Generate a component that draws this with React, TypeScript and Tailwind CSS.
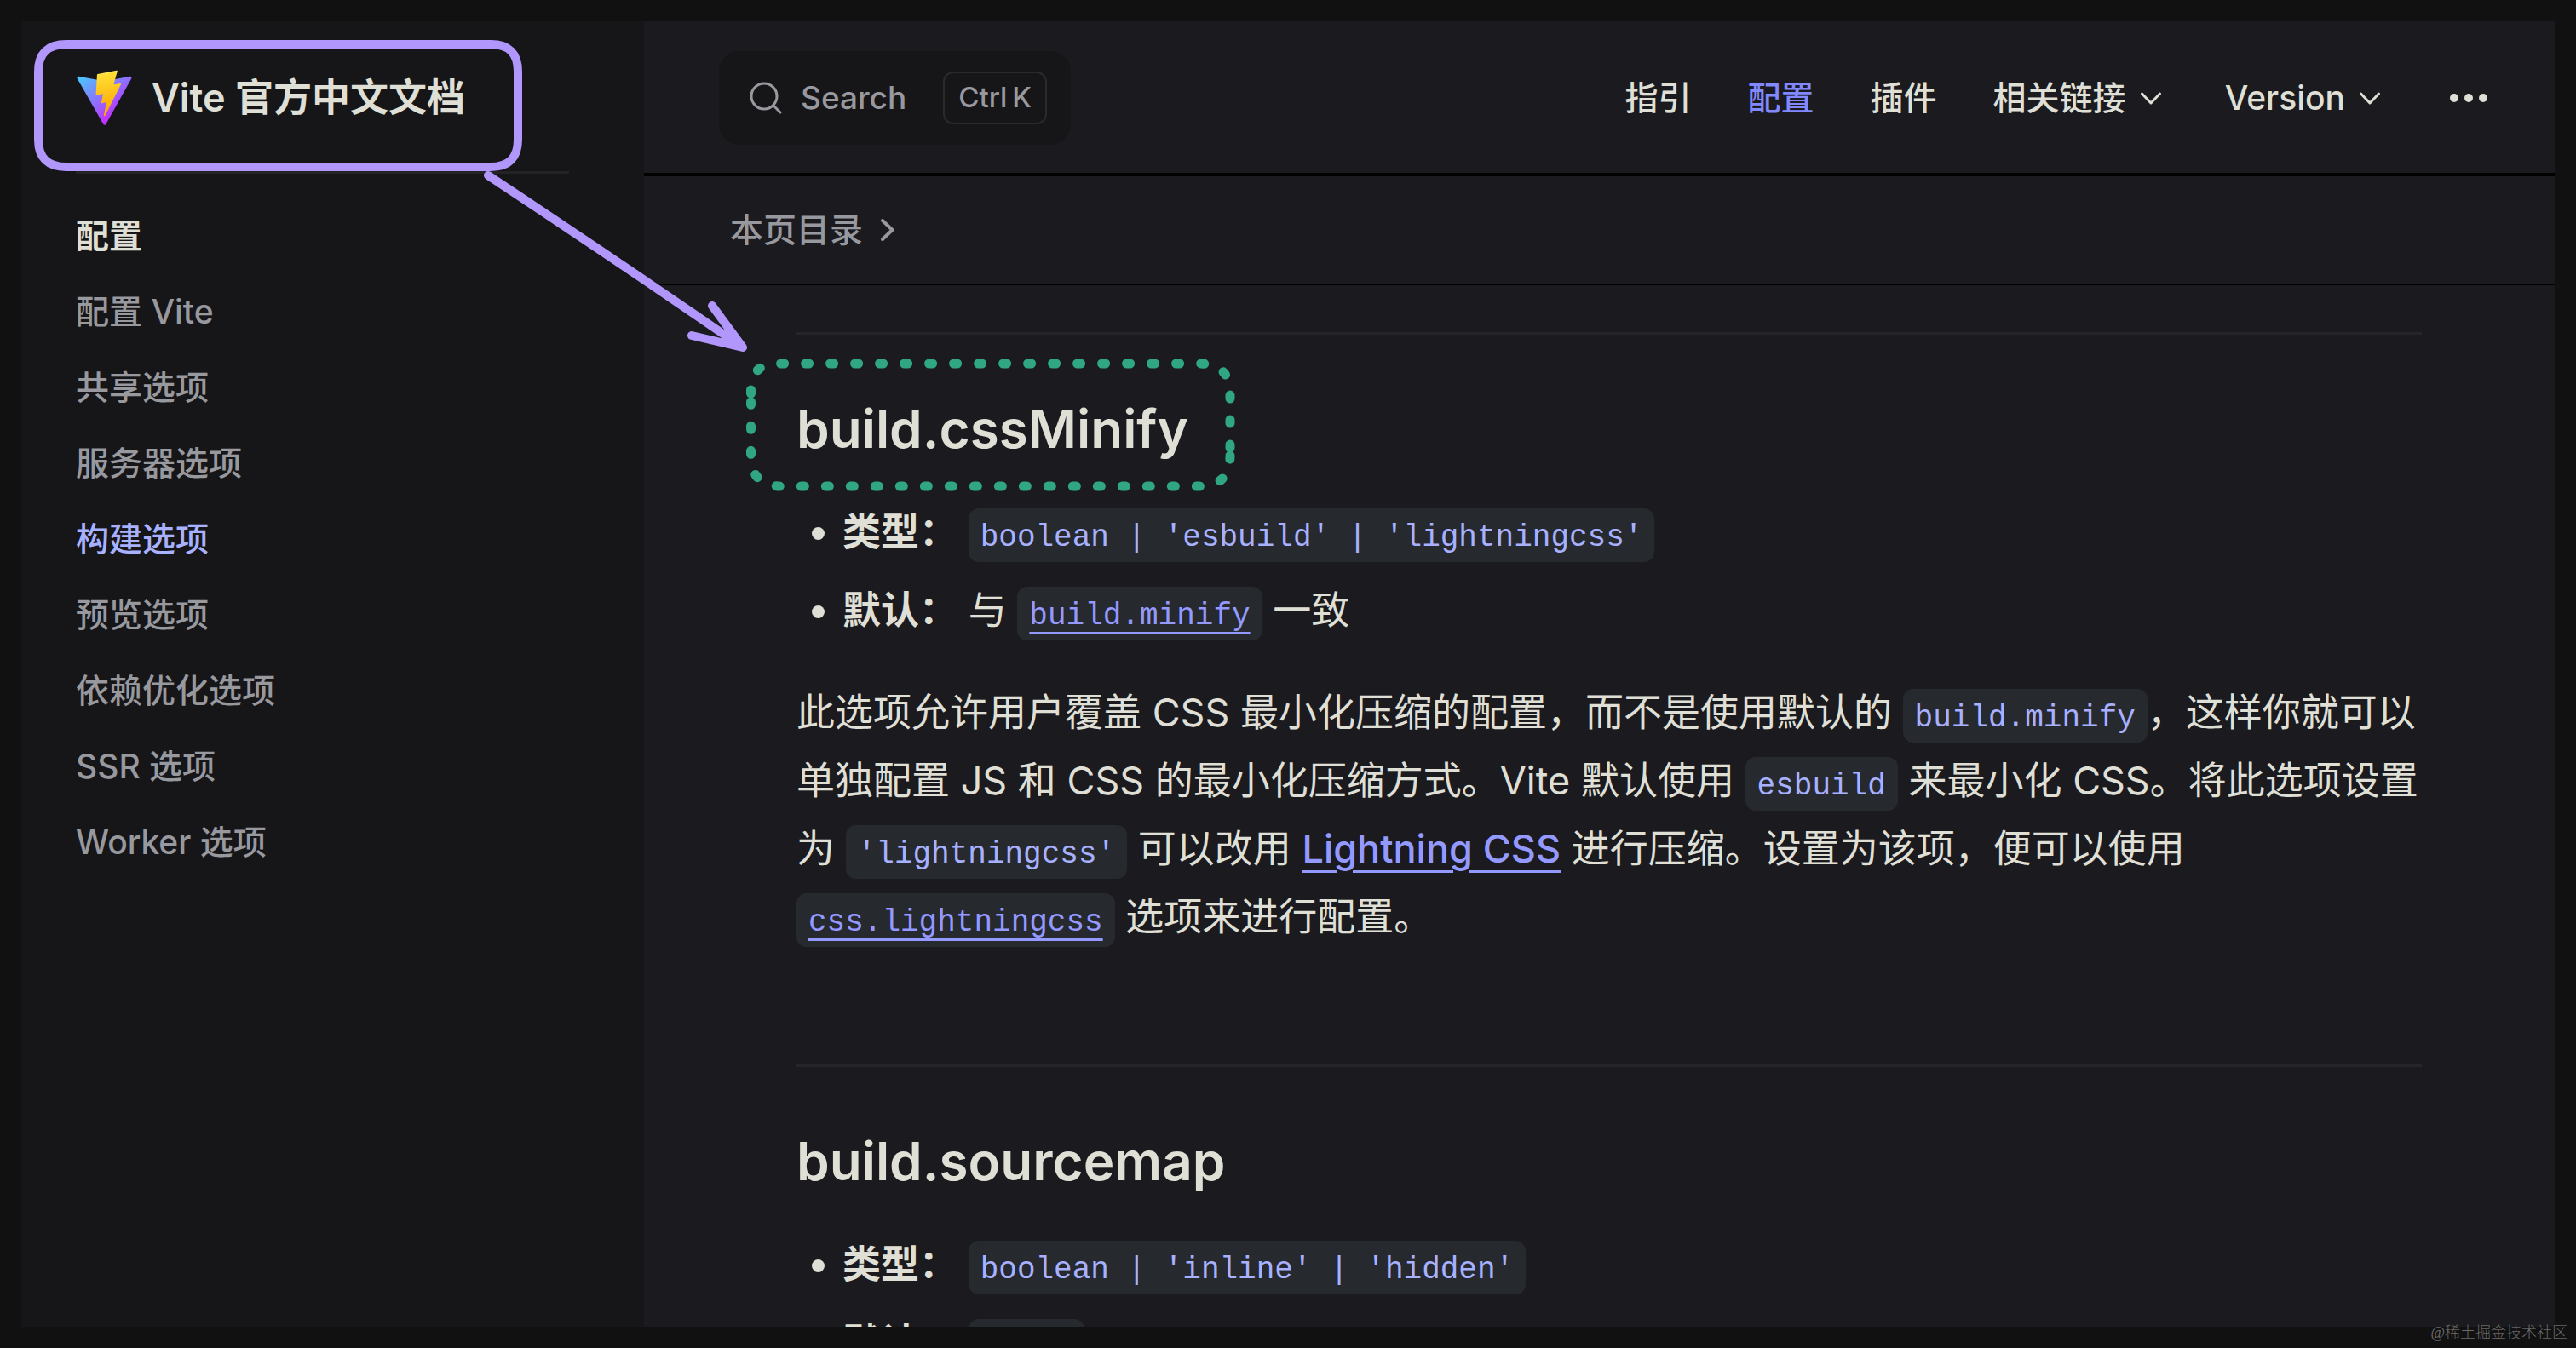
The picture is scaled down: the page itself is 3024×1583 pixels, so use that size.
import type { ReactNode } from "react";

const SIDEBAR_ITEMS = [
  "配置 Vite",
  "共享选项",
  "服务器选项",
  "构建选项",
  "预览选项",
  "依赖优化选项",
  "SSR 选项",
  "Worker 选项",
];
const ACTIVE_ITEM = "构建选项";

function ViteLogo() {
  return (
    <svg className="h-[67px] w-[67px] shrink-0" viewBox="0 0 410 404" fill="none" aria-hidden="true">
      <path
        d="M399.641 59.525L215.643 388.545C211.844 395.338 202.084 395.378 198.228 388.618L10.582 59.556C6.381 52.19 12.68 43.267 21.028 44.759L205.223 77.682C206.398 77.892 207.601 77.89 208.776 77.676L389.119 44.806C397.439 43.289 403.768 52.143 399.641 59.525Z"
        fill="url(#viteBody)"
      />
      <path
        d="M292.965 1.574L156.801 28.255C154.563 28.694 152.906 30.59 152.771 32.866L144.395 174.33C144.198 177.662 147.258 180.248 150.51 179.498L188.42 170.749C191.967 169.931 195.172 173.055 194.443 176.622L183.18 231.775C182.422 235.487 185.907 238.661 189.532 237.56L212.947 230.446C216.577 229.344 220.065 232.527 219.297 236.242L201.398 322.875C200.278 328.294 207.486 331.249 210.492 326.603L212.5 323.5L323.454 102.072C325.312 98.365 322.108 94.137 318.036 94.923L279.014 102.454C275.347 103.161 272.227 99.746 273.262 96.158L298.731 7.867C299.767 4.273 296.636 0.855 292.965 1.574Z"
        fill="url(#viteBolt)"
      />
      <defs>
        <linearGradient id="viteBody" x1="6" y1="33" x2="235" y2="344" gradientUnits="userSpaceOnUse">
          <stop stopColor="#41D1FF" />
          <stop offset="1" stopColor="#BD34FE" />
        </linearGradient>
        <linearGradient id="viteBolt" x1="194.651" y1="8.818" x2="236.076" y2="292.989" gradientUnits="userSpaceOnUse">
          <stop stopColor="#FFEA83" />
          <stop offset="0.083" stopColor="#FFDD35" />
          <stop offset="1" stopColor="#FFA800" />
        </linearGradient>
      </defs>
    </svg>
  );
}

function SearchIcon() {
  return (
    <svg className="h-[38px] w-[38px]" viewBox="0 0 38 38" fill="none" stroke="currentColor" strokeWidth="3" strokeLinecap="round" aria-hidden="true">
      <circle cx="17" cy="17" r="15" />
      <path d="M28 28l8 8" />
    </svg>
  );
}

function ChevronDown() {
  return (
    <svg className="h-[24px] w-[26px]" viewBox="0 0 26 24" fill="none" stroke="currentColor" strokeWidth="3" strokeLinecap="round" strokeLinejoin="round" aria-hidden="true">
      <path d="M2.5 7L13 18L23.5 7" />
    </svg>
  );
}

function ChevronRight() {
  return (
    <svg className="h-[28px] w-[18px]" viewBox="0 0 18 28" fill="none" stroke="currentColor" strokeWidth="4" strokeLinecap="round" strokeLinejoin="round" aria-hidden="true">
      <path d="M3 3L14.500 14L3 25" />
    </svg>
  );
}

function Code({ children }: { children: ReactNode }) {
  return (
    <code className="rounded-xl bg-[#26292e] px-[14px] pt-[14px] pb-2 font-['Liberation_Mono',monospace] text-[36px] leading-none whitespace-nowrap text-[#a8b1ff]">
      {children}
    </code>
  );
}

function CodeLink({ children }: { children: ReactNode }) {
  return (
    <a href="#" className="text-[#9499ff]">
      <code className="rounded-xl bg-[#26292e] px-[14px] pt-[14px] pb-2 font-['Liberation_Mono',monospace] text-[36px] leading-none whitespace-nowrap">
        <span className="underline decoration-[3px] underline-offset-[9px]">{children}</span>
      </code>
    </a>
  );
}

function Section({ title, children }: { title: string; children: ReactNode }) {
  return (
    <section className="border-t-[3px] border-[#25252a] pt-[66px]">
      <h2 className="text-[62px] leading-[90px] font-semibold">{title}</h2>
      {children}
    </section>
  );
}

function Options({ children }: { children: ReactNode }) {
  return <ul className="mt-9 list-disc space-y-3 pl-[54px]">{children}</ul>;
}

function Annotations() {
  return (
    <svg className="pointer-events-none absolute top-0 left-0 h-[600px] w-[1500px]" viewBox="0 0 1500 600" fill="none" strokeLinecap="round" aria-hidden="true">
      <g stroke="#b197fc" strokeWidth="10">
        <path d="M78 52H576Q608 52 608 84V164Q608 196 576 196H78Q45 196 45 164V84Q45 52 78 52Z" />
        <path d="M573 206Q730 310 872 408M836 359L872 408L812 394" strokeLinejoin="round" />
      </g>
      <g stroke="#30a782" strokeWidth="11" strokeDasharray="4 25">
        <path d="M881.500 462V458Q881.500 427 913 427H1408Q1444 427 1444 462V528" />
        <path d="M1444 535Q1444 571 1408 571H917Q881.500 571 881.500 535V472" />
      </g>
    </svg>
  );
}

export default function App() {
  return (
    <div className="relative h-screen overflow-hidden bg-[#111111] p-[25px] font-[Inter,'Noto_Sans_CJK_SC',sans-serif] text-[#dfdfd6]">
      <div className="flex h-full overflow-hidden bg-[#1b1b1f]">
        <aside className="w-[731px] shrink-0 bg-[#161618] pr-[88px] pl-16">
          <a href="#" className="flex h-[176px] items-center gap-[22px] pt-1 text-[45px] font-semibold">
            <ViteLogo />
            <span>
              Vite <span className="font-bold">官方中文文档</span>
            </span>
          </a>
          <nav aria-label="配置" className="border-t-[3px] border-[#232326] pt-7 text-[39px] leading-[67px]">
            <h2 className="py-[11px] font-bold">配置</h2>
            <ul>
              {SIDEBAR_ITEMS.map((item) => (
                <li key={item}>
                  <a
                    href="#"
                    className={
                      item === ACTIVE_ITEM
                        ? "block py-[11px] font-medium text-[#a8b1ff]"
                        : "block py-[11px] font-medium text-[#98989f]"
                    }
                  >
                    {item}
                  </a>
                </li>
              ))}
            </ul>
          </nav>
        </aside>

        <div className="min-w-0 flex-1">
          <header className="flex h-[182px] items-center justify-between border-b-4 border-black pt-0.5 pr-[78px] pl-[88px]">
            <button type="button" className="flex h-[110px] items-center rounded-3xl bg-[#161618] pr-7 pl-[36px] text-[#98989f]">
              <SearchIcon />
              <span className="ml-[22px] text-[37px] font-medium">Search</span>
              <kbd className="ml-[43px] flex h-[62px] items-center gap-1.5 rounded-xl border-2 border-[#2a2a2e] px-4 font-[Inter,sans-serif] text-[33px] font-medium">
                <span>Ctrl</span>
                <span>K</span>
              </kbd>
            </button>
            <nav aria-label="主导航" className="flex items-center gap-[66px] text-[39px] font-medium">
              <a href="#">指引</a>
              <a href="#" className="text-[#8288ff]">配置</a>
              <a href="#">插件</a>
              <button type="button" className="flex items-center gap-4 pr-2">
                相关链接
                <ChevronDown />
              </button>
              <button type="button" className="flex items-center gap-4 pr-2">
                Version
                <ChevronDown />
              </button>
              <button type="button" aria-label="更多" className="pl-1.5">
                <svg className="h-3 w-[46px]" viewBox="0 0 46 12" fill="currentColor" aria-hidden="true">
                  <circle cx="6" cy="6" r="5" />
                  <circle cx="23" cy="6" r="5" />
                  <circle cx="40" cy="6" r="5" />
                </svg>
              </button>
            </nav>
          </header>

          <div className="flex h-[128px] items-center border-b-2 border-black pl-[101px]">
            <button type="button" className="flex items-center gap-5 text-[39px] font-medium text-[#98989f]">
              本页目录
              <ChevronRight />
            </button>
          </div>

          <main className="flex flex-col gap-[133px] pt-[55px] pr-[156px] pl-[179px] text-[45px] leading-[80px]">
            <Section title="build.cssMinify">
              <Options>
                <li>
                  <strong>类型：</strong> <Code>boolean | 'esbuild' | 'lightningcss'</Code>
                </li>
                <li>
                  <strong>默认：</strong> 与 <CodeLink>build.minify</CodeLink> 一致
                </li>
              </Options>
              <p className="mt-10">
                此选项允许用户覆盖 CSS 最小化压缩的配置，而不是使用默认的 <Code>build.minify</Code>，这样你就可以单独配置
                JS 和 CSS 的最小化压缩方式。Vite 默认使用 <Code>esbuild</Code> 来最小化 CSS。将此选项设置为{" "}
                <Code>'lightningcss'</Code> 可以改用{" "}
                <a href="#" className="font-medium text-[#9499ff] underline decoration-[3px] underline-offset-[9px]">
                  Lightning CSS
                </a>{" "}
                进行压缩。设置为该项，便可以使用 <CodeLink>css.lightningcss</CodeLink> 选项来进行配置。
              </p>
            </Section>
            <Section title="build.sourcemap">
              <Options>
                <li>
                  <strong>类型：</strong> <Code>boolean | 'inline' | 'hidden'</Code>
                </li>
                <li>
                  <strong>默认：</strong> <Code>false</Code>
                </li>
              </Options>
            </Section>
          </main>
        </div>
      </div>
      <Annotations />
      <p className="absolute right-[10px] bottom-[6px] font-['Liberation_Serif','Noto_Sans_CJK_SC',serif] text-lg leading-6 font-light text-[#68686a]">
        @稀土掘金技术社区
      </p>
    </div>
  );
}
